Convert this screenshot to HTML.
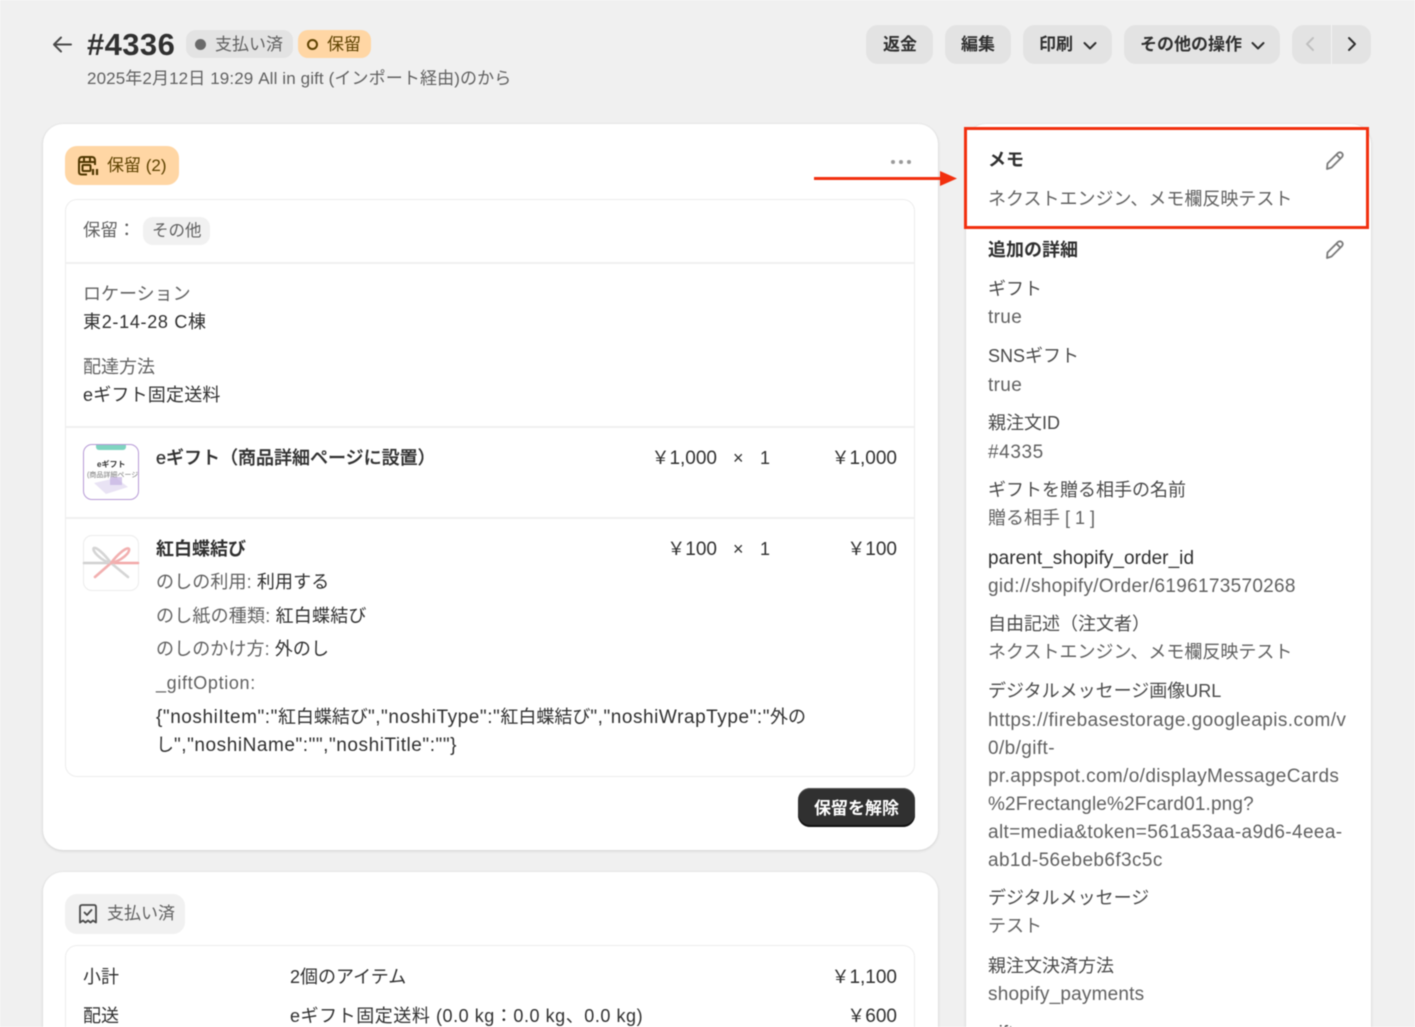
<!DOCTYPE html>
<html lang="ja"><head><meta charset="utf-8"><style>
html,body{margin:0;padding:0;width:1415px;height:1027px;overflow:hidden}
#root{position:absolute;left:0;top:0;width:1415px;height:1027px;overflow:hidden;background:#f0f0f0;font-family:"Liberation Sans","Noto Sans CJK JP",sans-serif;font-size:18px;color:#303030;filter:blur(.5px)}
.t{position:absolute;white-space:nowrap;line-height:28px;height:28px}
.g{color:#616161}
.b{font-weight:700}
.r{text-align:right}
.l{font-size:19px}
.l span{font-size:18px;letter-spacing:0}
.m{color:#4a4a4a}
.box{position:absolute;box-sizing:border-box}
.card{background:#fff;border-radius:20px;box-shadow:0 1px 0 #dcdcdc,0 1px 3px rgba(0,0,0,.12),0 0 0 1px rgba(0,0,0,.015)}
.btn{background:#e3e3e3;border-radius:12px;height:39px;top:25px}
.hr{position:absolute;height:2px;background:#f0f0f0}
.bt{top:31px;font-size:17px;font-weight:700;color:#303030}
svg{position:absolute;overflow:visible}
</style></head><body><div id="root">

<svg style="left:50px;top:32px" width="24" height="24" viewBox="0 0 24 24" fill="none" stroke="#4a4a4a" stroke-width="2" stroke-linecap="round" stroke-linejoin="round"><path d="M4 12.500H21M11 5.500L4 12.500L11 19.500"/></svg>
<div class="t b" style="left:87px;top:31px;font-size:31px;letter-spacing:.4px;color:#303030">#4336</div>
<div class="box" style="left:186px;top:30px;width:107px;height:28px;background:#e3e3e3;border-radius:10px"></div>
<div class="box" style="left:195px;top:39px;width:11px;height:11px;background:#6b6b6b;border-radius:50%"></div>
<div class="t g" style="left:215px;top:31px;font-size:17px">支払い済</div>
<div class="box" style="left:298px;top:30px;width:73px;height:28px;background:#ffd6a4;border-radius:10px"></div>
<div class="box" style="left:307px;top:39px;width:11px;height:11px;border:2px solid #5e4200;border-radius:50%"></div>
<div class="t" style="left:327px;top:31px;font-size:17px;color:#5e4200">保留</div>
<div class="t g" style="left:87px;top:65px;font-size:17px;letter-spacing:.12px">2025年2月12日 19:29 All in gift (インポート経由)のから</div>

<div class="box btn" style="left:866px;width:67px"></div>
<div class="t bt" style="left:883px">返金</div>
<div class="box btn" style="left:945px;width:66px"></div>
<div class="t bt" style="left:961px">編集</div>
<div class="box btn" style="left:1023px;width:89px"></div>
<div class="t bt" style="left:1039px">印刷</div>
<svg style="left:1082px;top:38px" width="16" height="16" fill="none" stroke="#303030" stroke-width="2" stroke-linecap="round" stroke-linejoin="round"><path d="M2.500 5L8 10.500L13.500 5"/></svg>
<div class="box btn" style="left:1124px;width:156px"></div>
<div class="t bt" style="left:1140px">その他の操作</div>
<svg style="left:1250px;top:38px" width="16" height="16" fill="none" stroke="#303030" stroke-width="2" stroke-linecap="round" stroke-linejoin="round"><path d="M2.500 5L8 10.500L13.500 5"/></svg>
<div class="box btn" style="left:1292px;width:79px"></div>
<div class="box" style="left:1331px;top:25px;width:1px;height:39px;background:#f4f4f4"></div>
<svg style="left:1303px;top:36px" width="14" height="16" fill="none" stroke="#c0c0c0" stroke-width="2" stroke-linecap="round" stroke-linejoin="round"><path d="M10 2L4 8L10 14"/></svg>
<svg style="left:1345px;top:36px" width="14" height="16" fill="none" stroke="#303030" stroke-width="2" stroke-linecap="round" stroke-linejoin="round"><path d="M4 2L10 8L4 14"/></svg>

<div class="box card" style="left:43px;top:124px;width:895px;height:726px"></div>
<div class="box" style="left:65px;top:146px;width:114px;height:39px;background:#ffd6a4;border-radius:12px"></div>
<svg style="left:77px;top:155px" width="22" height="22" viewBox="0 0 22 22" fill="none" stroke="#4f3700" stroke-width="2"><path d="M10 19.500H4.500Q2 19.500 2 17V6Q2 2 5 2H15Q18 2 18 6V10"/><path d="M2 7H18M7 2V7M13 2V7"/><rect x="5.500" y="10" width="8" height="6" rx="1"/><path d="M16 14V20M20 14V20" stroke-width="2.200"/></svg>
<div class="t" style="left:107px;top:152px;font-size:17px;color:#5e4200">保留 (2)</div>
<div class="box" style="left:891px;top:160px;width:4px;height:4px;border-radius:50%;background:#9a9a9a;box-shadow:8px 0 0 #9a9a9a,16px 0 0 #9a9a9a"></div>

<div class="box" style="left:65px;top:199px;width:850px;height:578px;border:1.500px solid #ededed;border-radius:12px"></div>
<div class="t g" style="left:83px;top:216px;font-size:17.500px">保留：</div>
<div class="box" style="left:143px;top:217px;width:67px;height:28px;background:#f1f1f1;border-radius:10px"></div>
<div class="t g" style="left:152px;top:217px;font-size:16.500px">その他</div>
<div class="hr" style="left:66px;top:262px;width:848px"></div>
<div class="t g" style="left:83px;top:280px">ロケーション</div>
<div class="t" style="left:83px;top:308px;letter-spacing:.7px">東2-14-28 C棟</div>
<div class="t g" style="left:83px;top:353px">配達方法</div>
<div class="t" style="left:83px;top:381px;letter-spacing:.2px">eギフト固定送料</div>
<div class="hr" style="left:66px;top:426px;width:848px"></div>

<div class="box" style="left:83px;top:444px;width:56px;height:56px;border-radius:9px;border:1.500px solid #b79ad6;background:#fff;overflow:hidden">
<div class="box" style="left:12px;top:0;width:30px;height:5px;background:#7fd4c0;border-radius:0 0 3px 3px"></div>
<div class="t b" style="left:13px;top:15px;font-size:8px;line-height:10px;height:10px;color:#333">eギフト</div>
<div class="t" style="left:3px;top:26px;font-size:7px;line-height:9px;height:9px;color:#777">(商品詳細ページ)</div>
<svg style="left:8px;top:30px" width="38" height="20" viewBox="0 0 38 20"><path d="M2 8L24 3L36 12L14 19Z" fill="#e9e3f4"/><path d="M18 2H30V10H18Z" fill="#c3b1e1" opacity=".7"/></svg>
</div>
<div class="t" style="left:156px;top:444px;font-weight:500;-webkit-text-stroke:.25px #303030">eギフト（商品詳細ページに設置）</div>
<div class="t r l" style="left:600px;width:117px;top:444px"><span>￥</span>1,000</div>
<div class="t" style="left:733px;top:444px">×</div>
<div class="t" style="left:760px;top:444px">1</div>
<div class="t r l" style="left:780px;width:117px;top:444px"><span>￥</span>1,000</div>
<div class="hr" style="left:66px;top:517px;width:848px"></div>

<div class="box" style="left:83px;top:535px;width:56px;height:56px;border-radius:9px;border:1.500px solid #ececec;background:#fff"></div>
<svg style="left:83px;top:535px" width="56" height="56" viewBox="0 0 56 56" fill="none" stroke-width="2.600" stroke-linecap="round"><path d="M1 28H28" stroke="#d0d0d0"/><path d="M28 28H55" stroke="#f2a8a8"/><path d="M28 28L45 42" stroke="#d5d5d5"/><path d="M28 28L12 42" stroke="#f2b0b0"/><path d="M28 28C22 20 14 12 11 13C8 15 18 26 28 28" stroke="#d5d5d5"/><path d="M28 28C34 20 44 11 46 14C47 18 38 26 28 28" stroke="#f2b0b0"/></svg>
<div class="t b" style="left:156px;top:535px">紅白蝶結び</div>
<div class="t r l" style="left:600px;width:117px;top:535px"><span>￥</span>100</div>
<div class="t" style="left:733px;top:535px">×</div>
<div class="t" style="left:760px;top:535px">1</div>
<div class="t r l" style="left:780px;width:117px;top:535px"><span>￥</span>100</div>
<div class="t" style="left:156px;top:568px;letter-spacing:.12px"><span class="g">のしの利用:</span> 利用する</div>
<div class="t" style="left:156px;top:602px;letter-spacing:.2px"><span class="g">のし紙の種類:</span> 紅白蝶結び</div>
<div class="t" style="left:156px;top:635px;letter-spacing:.1px"><span class="g">のしのかけ方:</span> 外のし</div>
<div class="t g" style="left:156px;top:669px;letter-spacing:.65px">_giftOption:</div>
<div class="t l" style="left:156px;top:703px;letter-spacing:.55px">{"noshiItem":"<span>紅白蝶結び</span>","noshiType":"<span>紅白蝶結び</span>","noshiWrapType":"<span>外の</span></div>
<div class="t l" style="left:156px;top:731px;letter-spacing:.55px"><span>し</span>","noshiName":"","noshiTitle":""}</div>

<div class="box" style="left:798px;top:788px;width:117px;height:39px;background:#303030;border-radius:12px;box-shadow:inset 0 -2px 0 #111,inset 0 1px 0 #555"></div>
<div class="t b" style="left:814px;top:795px;font-size:17px;color:#fff">保留を解除</div>

<div class="box card" style="left:43px;top:872px;width:895px;height:190px"></div>
<div class="box" style="left:65px;top:894px;width:120px;height:40px;background:#f1f1f1;border-radius:12px"></div>
<svg style="left:77px;top:903px" width="22" height="22" viewBox="0 0 22 22" fill="none" stroke="#4a4a4a" stroke-width="1.800" stroke-linejoin="round" stroke-linecap="round"><path d="M3 19.500V4Q3 2 5 2H17Q19 2 19 4V19.500L16 17.500L13.500 19.500L11 17.500L8.500 19.500L6 17.500Z"/><path d="M7.500 9.500L10 12L14.500 7"/></svg>
<div class="t g" style="left:107px;top:900px;font-size:17px">支払い済</div>
<div class="box" style="left:65px;top:945px;width:850px;height:120px;border:1.500px solid #ededed;border-radius:12px"></div>
<div class="t" style="left:83px;top:963px">小計</div>
<div class="t" style="left:290px;top:963px">2個のアイテム</div>
<div class="t r l" style="left:780px;width:117px;top:963px"><span>￥</span>1,100</div>
<div class="t" style="left:83px;top:1002px">配送</div>
<div class="t" style="left:290px;top:1002px;letter-spacing:.55px">eギフト固定送料 (0.0 kg：0.0 kg、0.0 kg)</div>
<div class="t r l" style="left:780px;width:117px;top:1002px"><span>￥</span>600</div>

<div class="box card" style="left:966px;top:124px;width:405px;height:950px"></div>
<div class="box" style="left:964px;top:127px;width:405px;height:102px;border:3px solid #f2300f;background:#fff"></div>
<div class="t b" style="left:988px;top:146px">メモ</div>
<svg style="left:1324px;top:150px" width="21" height="21" viewBox="0 0 21 21" fill="none" stroke="#7a7a7a" stroke-width="1.800" stroke-linejoin="round" stroke-linecap="round"><path d="M14 3Q16 1.500 18 3.200Q19.500 5 18 7L7.500 17.500L3 19L3.500 13.500Z"/><path d="M12.500 4.800L16.200 8.500"/></svg>
<div class="t g" style="left:988px;top:185px">ネクストエンジン、メモ欄反映テスト</div>
<div class="t b" style="left:988px;top:236px">追加の詳細</div>
<svg style="left:1324px;top:239px" width="21" height="21" viewBox="0 0 21 21" fill="none" stroke="#7a7a7a" stroke-width="1.800" stroke-linejoin="round" stroke-linecap="round"><path d="M14 3Q16 1.500 18 3.200Q19.500 5 18 7L7.500 17.500L3 19L3.500 13.500Z"/><path d="M12.500 4.800L16.200 8.500"/></svg>

<div class="t m" style="left:988px;top:275px">ギフト</div>
<div class="t g l" style="left:988px;top:304px;letter-spacing:.35px">true</div>
<div class="t m" style="left:988px;top:342px">SNSギフト</div>
<div class="t g l" style="left:988px;top:372px;letter-spacing:.35px">true</div>
<div class="t m" style="left:988px;top:409px">親注文ID</div>
<div class="t g l" style="left:988px;top:439px;letter-spacing:.6px">#4335</div>
<div class="t m" style="left:988px;top:476px">ギフトを贈る相手の名前</div>
<div class="t g" style="left:988px;top:504px">贈る相手 [ 1 ]</div>
<div class="t l" style="left:988px;top:545px;letter-spacing:.05px">parent_shopify_order_id</div>
<div class="t g l" style="left:988px;top:573px;letter-spacing:.3px">gid://shopify/Order/6196173570268</div>
<div class="t m" style="left:988px;top:610px">自由記述（注文者）</div>
<div class="t g" style="left:988px;top:638px">ネクストエンジン、メモ欄反映テスト</div>
<div class="t m" style="left:988px;top:677px">デジタルメッセージ画像URL</div>
<div class="t g l" style="left:988px;top:707px;letter-spacing:.43px">https://firebasestorage.googleapis.com/v</div>
<div class="t g l" style="left:988px;top:735px;letter-spacing:.4px">0/b/gift-</div>
<div class="t g l" style="left:988px;top:763px;letter-spacing:.37px">pr.appspot.com/o/displayMessageCards</div>
<div class="t g l" style="left:988px;top:791px;letter-spacing:.15px">%2Frectangle%2Fcard01.png?</div>
<div class="t g l" style="left:988px;top:819px;letter-spacing:.38px">alt=media&amp;token=561a53aa-a9d6-4eea-</div>
<div class="t g l" style="left:988px;top:847px;letter-spacing:.4px">ab1d-56ebeb6f3c5c</div>
<div class="t m" style="left:988px;top:884px">デジタルメッセージ</div>
<div class="t g" style="left:988px;top:912px">テスト</div>
<div class="t m" style="left:988px;top:952px">親注文決済方法</div>
<div class="t g l" style="left:988px;top:981px;letter-spacing:.2px">shopify_payments</div>
<div class="t m l" style="left:988px;top:1020px">gift</div>

<div class="box" style="left:814px;top:177px;width:130px;height:3px;background:#f2300f"></div>
<svg style="left:940px;top:171px" width="17" height="15"><path d="M0 0L17 7.500L0 15Z" fill="#f2300f"/></svg>

</div></body></html>
